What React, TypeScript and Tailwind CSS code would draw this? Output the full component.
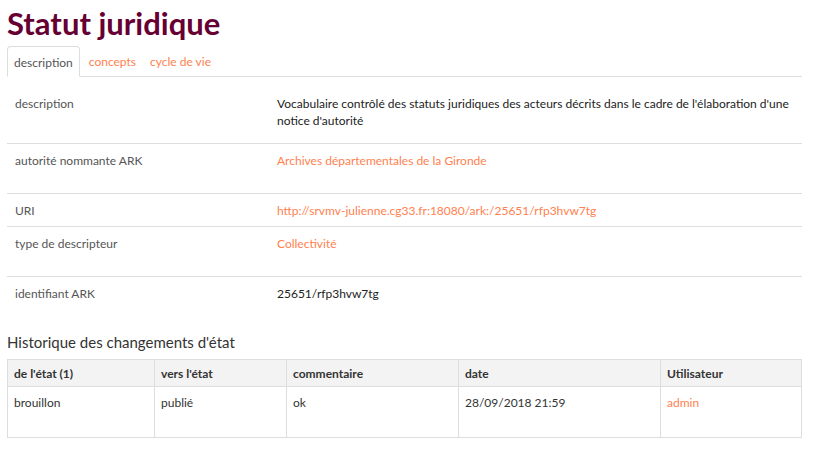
export default function App() {
  const rows = [
    {
      label: 'description',
      value: "Vocabulaire contrôlé des statuts juridiques des acteurs décrits dans le cadre de l'élaboration d'une notice d'autorité",
      link: false,
      h: 'h-[57px]',
    },
    { label: 'autorité nommante ARK', value: 'Archives départementales de la Gironde', link: true, h: 'h-[50px]' },
    { label: 'URI', value: 'http://srvmv-julienne.cg33.fr:18080/ark:/25651/rfp3hvw7tg', link: true, h: 'h-[33px]' },
    { label: 'type de descripteur', value: 'Collectivité', link: true, h: 'h-[50px]' },
    { label: 'identifiant ARK', value: '25651/rfp3hvw7tg', link: false, h: 'h-[40px]', last: true },
  ];

  const history = [
    { from: 'brouillon', to: 'publié', comment: 'ok', date: '28/09/2018 21:59', user: 'admin' },
  ];

  return (
    <div className="min-h-[450px] bg-white px-[7px] pt-[4px] text-[12px] leading-[17px] text-[#333] font-['Lato','Liberation_Sans',sans-serif] w-[809px]">
      <h1 className="text-[31px] leading-[38px] font-bold text-[#660033]">Statut juridique</h1>

      {/* onglets */}
      <div className="mt-[4px] flex border-b border-[#ddd] h-[31px]">
        <div className="px-[6px] pt-[7px] border border-[#ddd] border-b-white rounded-t-[4px] bg-white -mb-px text-[#555]">
          description
        </div>
        <div className="pl-[9px] pr-[8px] pt-[7px] text-[#ff7f50]">concepts</div>
        <div className="px-[6px] pt-[7px] text-[#ff7f50]">cycle de vie</div>
      </div>

      <div className="pt-[10px]">
        {rows.map((r) => (
          <div
            key={r.label}
            className={`flex pt-[8px] ${r.h} ${r.last ? '' : 'border-b border-[#ddd]'}`}
          >
            <div className="w-[270px] pl-[8px] text-[#555]">{r.label}</div>
            <div className={`flex-1 pr-[4px] ${r.link ? 'text-[#ff7f50]' : 'text-[#222]'}`}>{r.value}</div>
          </div>
        ))}
      </div>

      <h3 className="mt-[15px] text-[15px] leading-[20px] text-[#333]">Historique des changements d'état</h3>

      <table className="mt-[7px] w-full border-collapse border border-[#ddd]">
        <thead>
          <tr className="bg-[#f3f3f3] h-[27px] text-left">
            <th className="w-[147px] border border-[#ddd] px-[6px] font-bold">de l'état (1)</th>
            <th className="w-[132px] border border-[#ddd] px-[6px] font-bold">vers l'état</th>
            <th className="w-[172px] border border-[#ddd] px-[6px] font-bold">commentaire</th>
            <th className="w-[202px] border border-[#ddd] px-[6px] font-bold">date</th>
            <th className="border border-[#ddd] px-[6px] font-bold">Utilisateur</th>
          </tr>
        </thead>
        <tbody>
          {history.map((h) => (
            <tr key={h.date} className="h-[51px] align-top">
              <td className="border border-[#ddd] px-[6px] pt-[7px]">{h.from}</td>
              <td className="border border-[#ddd] px-[6px] pt-[7px]">{h.to}</td>
              <td className="border border-[#ddd] px-[6px] pt-[7px]">{h.comment}</td>
              <td className="border border-[#ddd] px-[6px] pt-[7px]">{h.date}</td>
              <td className="border border-[#ddd] px-[6px] pt-[7px] text-[#ff7f50]">{h.user}</td>
            </tr>
          ))}
        </tbody>
      </table>
    </div>
  );
}
